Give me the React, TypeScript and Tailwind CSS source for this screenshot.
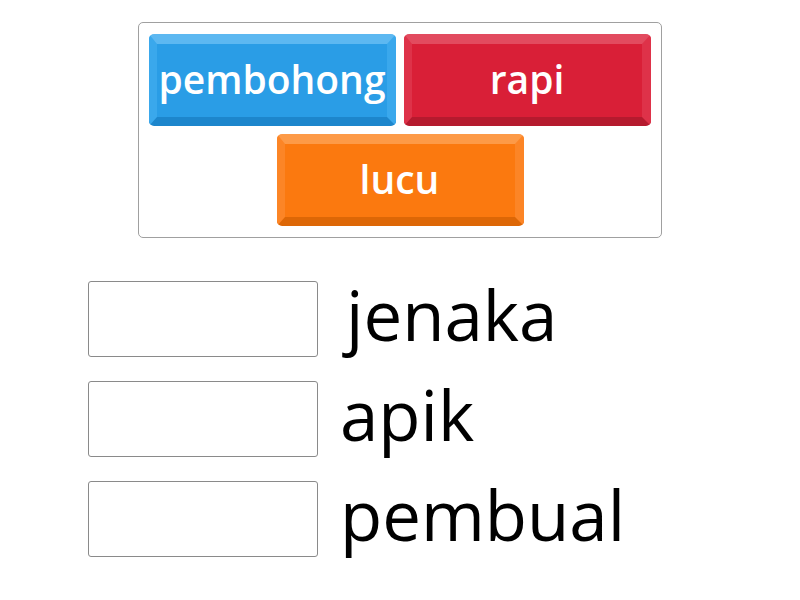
import React from "react";

const tiles = [
  { text: "pembohong", cls: "bg-[#2a9de6] border-t-[#5db8f1] border-x-[#3aa8ec] border-b-[#1d86cc]" },
  { text: "rapi", cls: "bg-[#d91f37] border-t-[#e24b5f] border-x-[#de3249] border-b-[#b51a2e]" },
  { text: "lucu", cls: "bg-[#fb790f] border-t-[#fd9a47] border-x-[#fc8526] border-b-[#dd6706]" },
];

function Tile({ text, cls }: { text: string; cls: string }) {
  return (
    <div
      className={`w-[247px] h-[92px] rounded-[5px] border-t-[10px] border-l-[8px] border-r-[9px] border-b-[9px] flex items-center justify-center text-white font-semibold text-[39px] leading-none ${cls}`}
    >
      <span className="-mt-[4px] whitespace-nowrap">{text}</span>
    </div>
  );
}

const words = [
  { w: "jenaka", cls: "ml-[28px]" },
  { w: "apik", cls: "ml-[22px]" },
  { w: "pembual", cls: "ml-[22px]" },
];

export default function App() {
  return (
    <div className="w-[800px] h-[600px] bg-white overflow-hidden" style={{ fontFamily: '"Open Sans", sans-serif' }}>
      <div className="pt-[22px] pl-[138px]">
        <div className="w-[524px] h-[216px] border border-[#a0a0a0] rounded-[5px] pt-[11px] px-[10px] flex flex-col items-center gap-[8px]">
          <div className="flex gap-[8px]">
            <Tile {...tiles[0]} />
            <Tile {...tiles[1]} />
          </div>
          <Tile {...tiles[2]} />
        </div>
      </div>
      <div className="pt-[43px] pl-[88px] flex flex-col gap-[24px]">
        {words.map(({ w, cls }) => (
          <div key={w} className="flex items-center h-[76px]">
            <div className="w-[230px] h-[76px] border border-[#8a8a8a] rounded-[3px] shrink-0" />
            <div className={`${cls} text-[69px] leading-none text-black -mt-[10px]`}>{w}</div>
          </div>
        ))}
      </div>
    </div>
  );
}
